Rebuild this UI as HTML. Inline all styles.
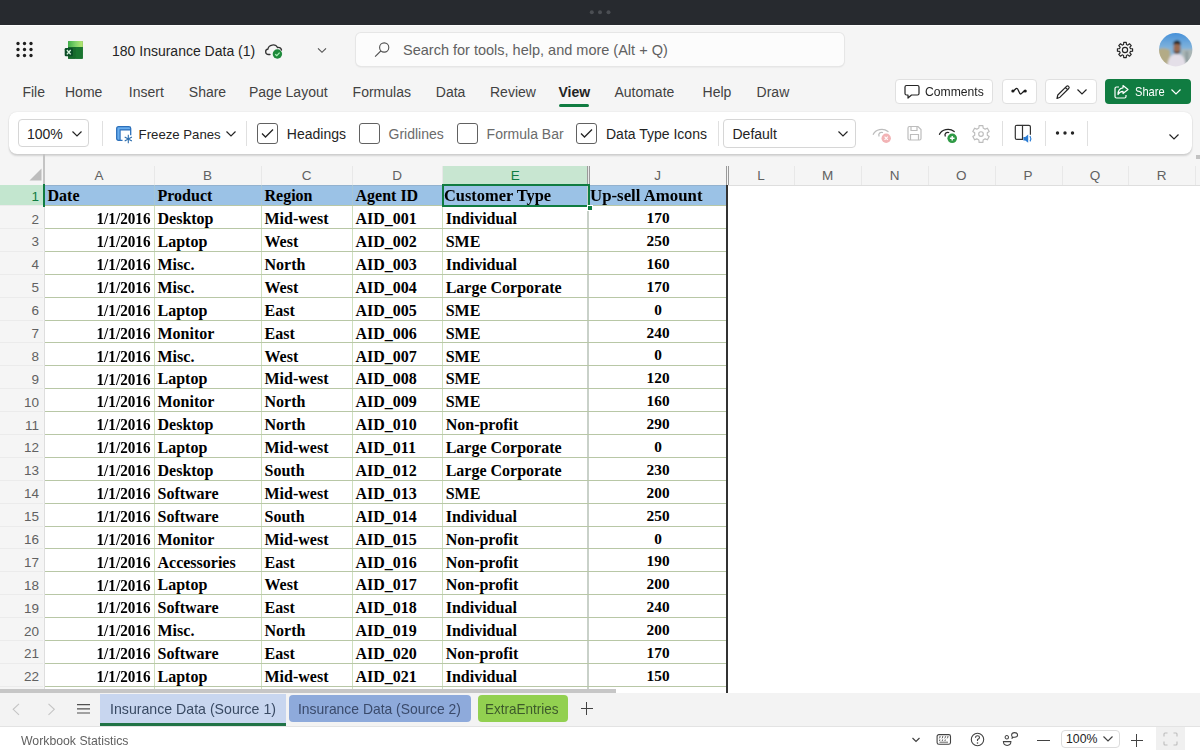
<!DOCTYPE html>
<html><head><meta charset="utf-8"><title>Excel</title>
<style>
html,body{margin:0;padding:0;width:1200px;height:750px;overflow:hidden;background:#f5f5f5;position:relative}
.t{position:absolute;line-height:1;white-space:nowrap}
svg{overflow:visible}
</style></head><body>
<div style="position:absolute;left:0px;top:0px;width:1200px;height:25px;background:#272a2f"></div>
<svg style="position:absolute;left:580px;top:4px" width="40" height="16" viewBox="0 0 40 16"><circle cx="11.799999999999955" cy="8.3" r="2" fill="#4b4e53"/><circle cx="20" cy="8.3" r="2" fill="#4b4e53"/><circle cx="28.5" cy="8.3" r="2" fill="#4b4e53"/></svg>
<div style="position:absolute;left:0px;top:25px;width:1200px;height:1px;background:#fdfdfd"></div>
<div style="position:absolute;left:0px;top:26px;width:1200px;height:664px;background:#f5f5f5"></div>
<svg style="position:absolute;left:10px;top:36px" width="30" height="28" viewBox="0 0 30 28"><circle cx="8" cy="7.5" r="1.65" fill="#1f1f1f"/><circle cx="14.5" cy="7.5" r="1.65" fill="#1f1f1f"/><circle cx="21" cy="7.5" r="1.65" fill="#1f1f1f"/><circle cx="8" cy="13.5" r="1.65" fill="#1f1f1f"/><circle cx="14.5" cy="13.5" r="1.65" fill="#1f1f1f"/><circle cx="21" cy="13.5" r="1.65" fill="#1f1f1f"/><circle cx="8" cy="19.5" r="1.65" fill="#1f1f1f"/><circle cx="14.5" cy="19.5" r="1.65" fill="#1f1f1f"/><circle cx="21" cy="19.5" r="1.65" fill="#1f1f1f"/></svg>
<svg style="position:absolute;left:60px;top:36px" width="28" height="28" viewBox="0 0 28 28">
<defs><linearGradient id="xg" x1="0" y1="0" x2="1" y2="0"><stop offset="0" stop-color="#3fae49"/><stop offset="0.5" stop-color="#7fd26a"/><stop offset="1" stop-color="#b8e872"/></linearGradient></defs>
<rect x="8" y="4.9" width="14.8" height="17.9" rx="1.3" fill="#1d6f2f"/>
<path d="M8 11 V6.2 Q8 4.9 9.3 4.9 H21.5 Q22.8 4.9 22.8 6.2 V11 Z" fill="url(#xg)"/>
<rect x="15.5" y="11" width="7.3" height="11.8" fill="#1a7530"/>
<rect x="8" y="11" width="7.5" height="11.8" fill="#176a2c"/>
<rect x="4.7" y="12" width="8.2" height="8.3" rx="1.2" fill="#0b4d27"/>
<path d="M6.9 14 L10.7 18.4 M10.7 14 L6.9 18.4" stroke="#d8f3df" stroke-width="1.4"/>
</svg>
<div class="t" style="left:112px;top:44.15px;font-size:14px;color:#242424;font-weight:normal;font-family:'Liberation Sans', sans-serif;">180 Insurance Data (1)</div>
<svg style="position:absolute;left:260px;top:38px" width="30" height="26" viewBox="0 0 30 26">
<path d="M10 16.5 H8.5 C5 16.5 4.6 11.5 8 11 C8.6 6.5 15.5 5.5 17.5 9.5 C19.5 9.3 21.2 10.5 21.5 12" fill="none" stroke="#333" stroke-width="1.3" stroke-linecap="round"/>
<circle cx="17.4" cy="16" r="4.7" fill="#1e8a3b"/>
<path d="M15.2 16.2 L16.8 17.6 L19.6 14.6" fill="none" stroke="#a6f0b4" stroke-width="1.3"/>
</svg>
<svg style="position:absolute;left:316px;top:45px" width="12" height="10" viewBox="0 0 12 10"><path d="M2 3.3 L6 7.3 L10 3.3" fill="none" stroke="#505050" stroke-width="1.1"/></svg>
<div style="position:absolute;left:355.5px;top:33px;width:488px;height:33px;background:#fcfcfc;border-radius:5px;box-shadow:0 0 0 1px #e6e6e6, 0 1px 2px rgba(0,0,0,.12)"></div>
<svg style="position:absolute;left:373px;top:42px" width="18" height="17" viewBox="0 0 18 17"><circle cx="11.2" cy="5.5" r="4.6" fill="none" stroke="#505050" stroke-width="1.1"/><path d="M7.9 8.8 L2.1 14.6" stroke="#505050" stroke-width="1.2"/></svg>
<div class="t" style="left:403px;top:43.22px;font-size:14.5px;color:#616161;font-weight:normal;font-family:'Liberation Sans', sans-serif;">Search for tools, help, and more (Alt + Q)</div>
<svg style="position:absolute;left:1115px;top:40px" width="20" height="20" viewBox="0 0 20 20"><path d="M8.59 4.58 L8.72 2.41 L11.28 2.41 L11.41 4.58 L12.83 5.17 L14.46 3.73 L16.27 5.54 L14.83 7.17 L15.42 8.59 L17.59 8.72 L17.59 11.28 L15.42 11.41 L14.83 12.83 L16.27 14.46 L14.46 16.27 L12.83 14.83 L11.41 15.42 L11.28 17.59 L8.72 17.59 L8.59 15.42 L7.17 14.83 L5.54 16.27 L3.73 14.46 L5.17 12.83 L4.58 11.41 L2.41 11.28 L2.41 8.72 L4.58 8.59 L5.17 7.17 L3.73 5.54 L5.54 3.73 L7.17 5.17 Z" fill="none" stroke="#242424" stroke-width="1.15" stroke-linejoin="round"/><circle cx="10" cy="10" r="2.6" fill="none" stroke="#242424" stroke-width="1.15"/></svg>
<svg style="position:absolute;left:1158.7px;top:33.2px" width="33.4" height="33.4" viewBox="0 0 33 33">
<defs><clipPath id="av"><circle cx="16.5" cy="16.5" r="16.5"/></clipPath>
<filter id="bl" x="-10%" y="-10%" width="120%" height="120%"><feGaussianBlur stdDeviation="0.9"/></filter>
<linearGradient id="sky" x1="0" y1="0" x2="0" y2="1"><stop offset="0" stop-color="#3d8bd8"/><stop offset="0.45" stop-color="#7fb2dc"/><stop offset="1" stop-color="#b9c3c8"/></linearGradient></defs>
<g clip-path="url(#av)"><g filter="url(#bl)">
<rect x="-3" y="-3" width="39" height="39" fill="url(#sky)"/>
<path d="M-3 17 C3 14 8 15 11 17 L11 36 H-3 Z" fill="#b3ab86"/>
<path d="M22 16 H36 V36 H22 Z" fill="#aab6b6"/>
<rect x="26" y="18" width="3" height="14" fill="#8e9c9e"/>
<path d="M8 36 C8.5 25 11 21 17.5 20.5 C24 21 26 25 27 36 Z" fill="#e4dfe8"/>
<ellipse cx="17.8" cy="14.5" rx="3.6" ry="4.6" fill="#9a6a50"/>
<path d="M14 11.5 C14.2 8.3 16 7.5 18 7.5 C20.2 7.5 21.8 8.8 21.5 12 C20 10.5 15.5 10.5 14 11.5 Z" fill="#1e1a18"/>
<path d="M14.5 16 C15 20 20.5 20 21 16 L21 18.5 C20 21.5 15.5 21.5 14.5 18.5 Z" fill="#3a2a20"/>
</g></g></svg>
<div class="t" style="left:22.4px;top:85.15px;font-size:14px;color:#424242;font-weight:normal;font-family:'Liberation Sans', sans-serif;">File</div>
<div class="t" style="left:65px;top:85.15px;font-size:14px;color:#424242;font-weight:normal;font-family:'Liberation Sans', sans-serif;">Home</div>
<div class="t" style="left:128.8px;top:85.15px;font-size:14px;color:#424242;font-weight:normal;font-family:'Liberation Sans', sans-serif;">Insert</div>
<div class="t" style="left:188.8px;top:85.15px;font-size:14px;color:#424242;font-weight:normal;font-family:'Liberation Sans', sans-serif;">Share</div>
<div class="t" style="left:249px;top:85.15px;font-size:14px;color:#424242;font-weight:normal;font-family:'Liberation Sans', sans-serif;">Page Layout</div>
<div class="t" style="left:352.6px;top:85.15px;font-size:14px;color:#424242;font-weight:normal;font-family:'Liberation Sans', sans-serif;">Formulas</div>
<div class="t" style="left:435.8px;top:85.15px;font-size:14px;color:#424242;font-weight:normal;font-family:'Liberation Sans', sans-serif;">Data</div>
<div class="t" style="left:490px;top:85.15px;font-size:14px;color:#424242;font-weight:normal;font-family:'Liberation Sans', sans-serif;">Review</div>
<div class="t" style="left:558.5px;top:85.15px;font-size:14px;color:#242424;font-weight:bold;font-family:'Liberation Sans', sans-serif;">View</div>
<div class="t" style="left:614.4px;top:85.15px;font-size:14px;color:#424242;font-weight:normal;font-family:'Liberation Sans', sans-serif;">Automate</div>
<div class="t" style="left:702.6px;top:85.15px;font-size:14px;color:#424242;font-weight:normal;font-family:'Liberation Sans', sans-serif;">Help</div>
<div class="t" style="left:756.6px;top:85.15px;font-size:14px;color:#424242;font-weight:normal;font-family:'Liberation Sans', sans-serif;">Draw</div>
<div style="position:absolute;left:559px;top:104px;width:30px;height:3px;background:#107c41;border-radius:2px"></div>
<div style="position:absolute;left:894.7px;top:79.3px;width:98px;height:25px;background:#fff;border:1px solid #e0e0e0;border-radius:4px;box-sizing:border-box"></div>
<svg style="position:absolute;left:903px;top:83px" width="18" height="18" viewBox="0 0 18 18"><path d="M3.5 2.5 H14.5 Q16 2.5 16 4 V10.5 Q16 12 14.5 12 H8.5 L5 15 V12 H3.5 Q2 12 2 10.5 V4 Q2 2.5 3.5 2.5 Z" fill="none" stroke="#242424" stroke-width="1.2" stroke-linejoin="round"/></svg>
<div class="t" style="left:924.8px;top:84.99px;font-size:13px;color:#242424;font-weight:normal;font-family:'Liberation Sans', sans-serif;transform:scaleX(0.9340);transform-origin:left top;">Comments</div>
<div style="position:absolute;left:1002px;top:79.3px;width:34.5px;height:25px;background:#fff;border:1px solid #e0e0e0;border-radius:4px;box-sizing:border-box"></div>
<svg style="position:absolute;left:1008px;top:84px" width="22" height="14" viewBox="0 0 22 14"><path d="M4.9 7 C6.5 7 7.5 4.3 8.8 4.3 C10.5 4.3 10.8 10 12.6 10 C14 10 14.5 7 17.2 7" fill="none" stroke="#1a1a1a" stroke-width="1.3" stroke-linecap="round"/><circle cx="4.9" cy="7" r="1.6" fill="#1a1a1a"/><circle cx="17.2" cy="7" r="1.6" fill="#1a1a1a"/></svg>
<div style="position:absolute;left:1045px;top:79.3px;width:51.5px;height:25px;background:#fff;border:1px solid #e0e0e0;border-radius:4px;box-sizing:border-box"></div>
<svg style="position:absolute;left:1054px;top:83px" width="18" height="18" viewBox="0 0 18 18"><path d="M3 15.5 L3.8 12 L12.5 3.3 Q13.5 2.3 14.6 3.4 Q15.7 4.5 14.7 5.5 L6 14.2 Z M11.3 4.5 L13.5 6.7" fill="none" stroke="#242424" stroke-width="1.2" stroke-linejoin="round"/></svg>
<svg style="position:absolute;left:1076px;top:88px" width="12" height="8" viewBox="0 0 12 8"><path d="M1.5 1.5 L6 6 L10.5 1.5" fill="none" stroke="#242424" stroke-width="1.2"/></svg>
<div style="position:absolute;left:1104.8px;top:79.3px;width:86.7px;height:25px;background:#107c41;border-radius:4px"></div>
<svg style="position:absolute;left:1113px;top:84px" width="17" height="16" viewBox="0 0 17 16"><path d="M6 3 H3.5 Q2 3 2 4.5 V12.5 Q2 14 3.5 14 H11.5 Q13 14 13 12.5 V11" fill="none" stroke="#fff" stroke-width="1.2"/><path d="M10 1.5 L15 5.5 L10 9.5 V7.3 C7.5 7.3 6 8.5 5 10.5 C5 6.5 7 4.2 10 3.8 Z" fill="none" stroke="#fff" stroke-width="1.2" stroke-linejoin="round"/></svg>
<div class="t" style="left:1135.4px;top:84.99px;font-size:13px;color:#ffffff;font-weight:normal;font-family:'Liberation Sans', sans-serif;transform:scaleX(0.8533);transform-origin:left top;">Share</div>
<svg style="position:absolute;left:1170px;top:88px" width="12" height="8" viewBox="0 0 12 8"><path d="M1.5 1.5 L6 6 L10.5 1.5" fill="none" stroke="#fff" stroke-width="1.2"/></svg>
<div style="position:absolute;left:0px;top:154px;width:1200px;height:31px;background:#f5f5f5"></div>
<div style="position:absolute;left:1196px;top:154.5px;width:4px;height:4px;background:#c2c2c2"></div>
<div style="position:absolute;left:9px;top:112.3px;width:1182.5px;height:42px;background:#fff;border-radius:8px;box-shadow:0 2px 2px rgba(0,0,0,.14),0 0 1.5px rgba(0,0,0,.12)"></div>
<div style="position:absolute;left:18px;top:119.2px;width:71.4px;height:28.2px;background:#fff;border:1px solid #d6d6d6;border-radius:4px;box-sizing:border-box"></div>
<div class="t" style="left:27px;top:127.15px;font-size:14px;color:#242424;font-weight:normal;font-family:'Liberation Sans', sans-serif;">100%</div>
<svg style="position:absolute;left:71px;top:130px" width="12" height="8" viewBox="0 0 12 8"><path d="M1.5 1.5 L6 6 L10.5 1.5" fill="none" stroke="#242424" stroke-width="1.2"/></svg>
<div style="position:absolute;left:102px;top:121px;width:1px;height:25px;background:#e0e0e0"></div>
<svg style="position:absolute;left:116px;top:126px" width="18" height="18" viewBox="0 0 18 18">
<path d="M0.7 2.5 Q0.7 0.7 2.5 0.7 H12.9 Q14.7 0.7 14.7 2.5 V3.9 H4.1 V14.3 H2.5 Q0.7 14.3 0.7 12.5 Z" fill="#6aaeee"/>
<path d="M6.5 14.3 H2.5 Q0.7 14.3 0.7 12.5 V2.5 Q0.7 0.7 2.5 0.7 H12.9 Q14.7 0.7 14.7 2.5 V9.3" fill="none" stroke="#2b6fba" stroke-width="1.3"/>
<path d="M4.1 14.3 V3.9 H14.7" fill="none" stroke="#2b6fba" stroke-width="1.1"/>
<path d="M12.3 8.8 V17.2 M8.7 10.9 L15.9 15.1 M15.9 10.9 L8.7 15.1" stroke="#2f6fae" stroke-width="1.1"/>
</svg>
<div class="t" style="left:138.6px;top:128.12px;font-size:13.2px;color:#242424;font-weight:normal;font-family:'Liberation Sans', sans-serif;">Freeze Panes</div>
<svg style="position:absolute;left:225px;top:130px" width="12" height="8" viewBox="0 0 12 8"><path d="M1.5 1.5 L6 6 L10.5 1.5" fill="none" stroke="#242424" stroke-width="1.2"/></svg>
<div style="position:absolute;left:246px;top:121px;width:1px;height:25px;background:#e0e0e0"></div>
<div style="position:absolute;left:257px;top:123px;width:20.5px;height:20.5px;border:1px solid #616161;border-radius:3px;box-sizing:border-box;background:#fff"></div>
<svg style="position:absolute;left:257px;top:123px" width="21" height="21" viewBox="0 0 21 21"><path d="M5 10.5 L8.5 14 L16 6.5" fill="none" stroke="#242424" stroke-width="1.3"/></svg>
<div class="t" style="left:286.8px;top:127.45px;font-size:14px;color:#242424;font-weight:normal;font-family:'Liberation Sans', sans-serif;">Headings</div>
<div style="position:absolute;left:359.3px;top:123px;width:20.5px;height:20.5px;border:1px solid #616161;border-radius:3px;box-sizing:border-box;background:#fff"></div>
<div class="t" style="left:388.5px;top:127.45px;font-size:14px;color:#6b6b6b;font-weight:normal;font-family:'Liberation Sans', sans-serif;">Gridlines</div>
<div style="position:absolute;left:457.3px;top:123px;width:20.5px;height:20.5px;border:1px solid #616161;border-radius:3px;box-sizing:border-box;background:#fff"></div>
<div class="t" style="left:486.6px;top:127.45px;font-size:14px;color:#6b6b6b;font-weight:normal;font-family:'Liberation Sans', sans-serif;">Formula Bar</div>
<div style="position:absolute;left:576px;top:123px;width:20.5px;height:20.5px;border:1px solid #616161;border-radius:3px;box-sizing:border-box;background:#fff"></div>
<svg style="position:absolute;left:576px;top:123px" width="21" height="21" viewBox="0 0 21 21"><path d="M5 10.5 L8.5 14 L16 6.5" fill="none" stroke="#242424" stroke-width="1.3"/></svg>
<div class="t" style="left:606px;top:127.45px;font-size:14px;color:#242424;font-weight:normal;font-family:'Liberation Sans', sans-serif;">Data Type Icons</div>
<div style="position:absolute;left:718px;top:121px;width:1px;height:25px;background:#e0e0e0"></div>
<div style="position:absolute;left:723px;top:119px;width:133px;height:28.6px;background:#fff;border:1px solid #d6d6d6;border-radius:4px;box-sizing:border-box"></div>
<div class="t" style="left:732.5px;top:127.15px;font-size:14px;color:#242424;font-weight:normal;font-family:'Liberation Sans', sans-serif;">Default</div>
<svg style="position:absolute;left:837px;top:130px" width="12" height="8" viewBox="0 0 12 8"><path d="M1.5 1.5 L6 6 L10.5 1.5" fill="none" stroke="#242424" stroke-width="1.2"/></svg>
<svg style="position:absolute;left:871px;top:124px" width="22" height="20" viewBox="0 0 22 20"><path d="M2.3 10.3 C4.5 5.5 12 3.5 17 7.5" fill="none" stroke="#bdbdbd" stroke-width="1.3" stroke-linecap="round"/><path d="M8 12 C7 9.5 9.5 7.8 11.5 8.5" fill="none" stroke="#bdbdbd" stroke-width="1.3" stroke-linecap="round"/><circle cx="15.2" cy="14.3" r="4.7" fill="#f2b3b5"/><path d="M13.6 12.7 L16.8 15.9 M16.8 12.7 L13.6 15.9" stroke="#fff" stroke-width="1.1"/></svg>
<svg style="position:absolute;left:906px;top:125px" width="17" height="17" viewBox="0 0 17 17">
<path d="M2 3 Q2 1.5 3.5 1.5 H12 L15 4.5 V13.5 Q15 15 13.5 15 H3.5 Q2 15 2 13.5 Z" fill="none" stroke="#bdbdbd" stroke-width="1.2"/>
<path d="M5 1.8 V5.5 H11 V1.8 M4.5 15 V9.5 H12.5 V15" fill="none" stroke="#bdbdbd" stroke-width="1.2"/></svg>
<svg style="position:absolute;left:938px;top:124px" width="22" height="20" viewBox="0 0 22 20"><path d="M1.5 10.3 C3.7 5.5 11.2 3.5 16.2 7.5" fill="none" stroke="#242424" stroke-width="1.3" stroke-linecap="round"/><path d="M7.2 12 C6.2 9.5 8.7 7.8 10.7 8.5" fill="none" stroke="#242424" stroke-width="1.3" stroke-linecap="round"/><circle cx="14.2" cy="14.3" r="4.8" fill="#2f9a45"/><path d="M11.9 14.3 H16.5 M14.2 12 V16.6" stroke="#fff" stroke-width="1.4"/></svg>
<svg style="position:absolute;left:971px;top:124px" width="20" height="20" viewBox="0 0 20 20"><path d="M7.86 3.97 L8.10 1.61 L11.90 1.61 L12.14 3.97 L14.16 5.13 L16.32 4.16 L18.21 7.45 L16.29 8.83 L16.29 11.17 L18.21 12.55 L16.32 15.84 L14.16 14.87 L12.14 16.03 L11.90 18.39 L8.10 18.39 L7.86 16.03 L5.84 14.87 L3.68 15.84 L1.79 12.55 L3.71 11.17 L3.71 8.83 L1.79 7.45 L3.68 4.16 L5.84 5.13 Z" fill="none" stroke="#bdbdbd" stroke-width="1.15" stroke-linejoin="round"/><circle cx="10" cy="10" r="2.3" fill="none" stroke="#bdbdbd" stroke-width="1.15"/></svg>
<div style="position:absolute;left:1002px;top:121px;width:1px;height:25px;background:#e0e0e0"></div>
<svg style="position:absolute;left:1013px;top:124px" width="22" height="20" viewBox="0 0 22 20"><path d="M9.5 15.4 H3.8 Q2.3 15.4 2.3 13.9 V2.8 Q2.3 1.3 3.8 1.3 H9.5 Z" fill="none" stroke="#333" stroke-width="1.2" stroke-linejoin="round"/><path d="M9.5 1.3 H15.9 Q17.4 1.3 17.4 2.8 V10.8" fill="none" stroke="#333" stroke-width="1.2"/><path d="M10.4 13 H12.2 L15.2 10.5 V18.8 L12.2 16.5 H10.4 Z" fill="#2b7cd3"/><path d="M17 12 Q18.6 14.6 17 17.4" fill="none" stroke="#2b7cd3" stroke-width="1.2"/></svg>
<div style="position:absolute;left:1044.8px;top:121px;width:1px;height:25px;background:#e0e0e0"></div>
<svg style="position:absolute;left:1050px;top:126px" width="30" height="14" viewBox="0 0 30 14"><circle cx="7.5" cy="7" r="1.7" fill="#242424"/><circle cx="15" cy="7" r="1.7" fill="#242424"/><circle cx="22.5" cy="7" r="1.7" fill="#242424"/></svg>
<div style="position:absolute;left:1087px;top:121px;width:1px;height:25px;background:#e0e0e0"></div>
<svg style="position:absolute;left:1168px;top:133px" width="12" height="8" viewBox="0 0 12 8"><path d="M1.5 1.5 L6 6 L10.5 1.5" fill="none" stroke="#242424" stroke-width="1.2"/></svg>
<div style="position:absolute;left:0px;top:185px;width:44px;height:508px;background:#f5f5f5"></div>
<div style="position:absolute;left:45px;top:185.5px;width:1155px;height:507.5px;background:#ffffff"></div>
<div style="position:absolute;left:45px;top:184.5px;width:1155px;height:1px;background:#dedede"></div>
<div style="position:absolute;left:442.2px;top:166px;width:146px;height:18.5px;background:#c8e6d1"></div>
<div style="position:absolute;left:154px;top:166px;width:1px;height:19px;background:#e8e8e8"></div>
<div style="position:absolute;left:261px;top:166px;width:1px;height:19px;background:#e8e8e8"></div>
<div style="position:absolute;left:352px;top:166px;width:1px;height:19px;background:#e8e8e8"></div>
<div style="position:absolute;left:442.2px;top:166px;width:1px;height:19px;background:#e8e8e8"></div>
<div style="position:absolute;left:588.2px;top:166px;width:1px;height:19px;background:#e8e8e8"></div>
<div style="position:absolute;left:727.5px;top:166px;width:1px;height:19px;background:#e8e8e8"></div>
<div style="position:absolute;left:794.3px;top:166px;width:1px;height:19px;background:#e8e8e8"></div>
<div style="position:absolute;left:861.1px;top:166px;width:1px;height:19px;background:#e8e8e8"></div>
<div style="position:absolute;left:927.9px;top:166px;width:1px;height:19px;background:#e8e8e8"></div>
<div style="position:absolute;left:994.7px;top:166px;width:1px;height:19px;background:#e8e8e8"></div>
<div style="position:absolute;left:1061.5px;top:166px;width:1px;height:19px;background:#e8e8e8"></div>
<div style="position:absolute;left:1128.3px;top:166px;width:1px;height:19px;background:#e8e8e8"></div>
<div style="position:absolute;left:1195.1px;top:166px;width:1px;height:19px;background:#e8e8e8"></div>
<div style="position:absolute;left:586.5px;top:166px;width:1px;height:19px;background:#9a9a9a"></div>
<div style="position:absolute;left:588.5px;top:166px;width:1px;height:19px;background:#9a9a9a"></div>
<div style="position:absolute;left:725.5px;top:166px;width:1px;height:19px;background:#9a9a9a"></div>
<div style="position:absolute;left:727.5px;top:166px;width:1px;height:19px;background:#9a9a9a"></div>
<div class="t" style="left:-101.0px;width:400px;text-align:center;top:169.17px;font-size:13.5px;color:#616161;font-weight:normal;font-family:'Liberation Sans', sans-serif;">A</div>
<div class="t" style="left:7.5px;width:400px;text-align:center;top:169.17px;font-size:13.5px;color:#616161;font-weight:normal;font-family:'Liberation Sans', sans-serif;">B</div>
<div class="t" style="left:106.5px;width:400px;text-align:center;top:169.17px;font-size:13.5px;color:#616161;font-weight:normal;font-family:'Liberation Sans', sans-serif;">C</div>
<div class="t" style="left:197.10000000000002px;width:400px;text-align:center;top:169.17px;font-size:13.5px;color:#616161;font-weight:normal;font-family:'Liberation Sans', sans-serif;">D</div>
<div class="t" style="left:315.20000000000005px;width:400px;text-align:center;top:169.17px;font-size:13.5px;color:#107c41;font-weight:normal;font-family:'Liberation Sans', sans-serif;">E</div>
<div class="t" style="left:457.6px;width:400px;text-align:center;top:169.17px;font-size:13.5px;color:#616161;font-weight:normal;font-family:'Liberation Sans', sans-serif;">J</div>
<div class="t" style="left:560.9px;width:400px;text-align:center;top:169.17px;font-size:13.5px;color:#616161;font-weight:normal;font-family:'Liberation Sans', sans-serif;">L</div>
<div class="t" style="left:627.7px;width:400px;text-align:center;top:169.17px;font-size:13.5px;color:#616161;font-weight:normal;font-family:'Liberation Sans', sans-serif;">M</div>
<div class="t" style="left:694.5px;width:400px;text-align:center;top:169.17px;font-size:13.5px;color:#616161;font-weight:normal;font-family:'Liberation Sans', sans-serif;">N</div>
<div class="t" style="left:761.3px;width:400px;text-align:center;top:169.17px;font-size:13.5px;color:#616161;font-weight:normal;font-family:'Liberation Sans', sans-serif;">O</div>
<div class="t" style="left:828.0999999999999px;width:400px;text-align:center;top:169.17px;font-size:13.5px;color:#616161;font-weight:normal;font-family:'Liberation Sans', sans-serif;">P</div>
<div class="t" style="left:894.9000000000001px;width:400px;text-align:center;top:169.17px;font-size:13.5px;color:#616161;font-weight:normal;font-family:'Liberation Sans', sans-serif;">Q</div>
<div class="t" style="left:961.6999999999998px;width:400px;text-align:center;top:169.17px;font-size:13.5px;color:#616161;font-weight:normal;font-family:'Liberation Sans', sans-serif;">R</div>
<div class="t" style="left:1028.5px;width:400px;text-align:center;top:169.17px;font-size:13.5px;color:#616161;font-weight:normal;font-family:'Liberation Sans', sans-serif;">S</div>
<svg style="position:absolute;left:29px;top:168px" width="13" height="13" viewBox="0 0 13 13"><path d="M12.5 0.5 V12.5 H0.5 Z" fill="#bdbdbd"/></svg>
<div style="position:absolute;left:43px;top:154px;width:2px;height:30px;background:#c4c4c4"></div>
<div style="position:absolute;left:44px;top:184px;width:1px;height:506px;background:#dedede"></div>
<div style="position:absolute;left:45px;top:184.7px;width:682px;height:21px;background:#9bc2e6"></div>
<div style="position:absolute;left:45px;top:184.7px;width:682px;height:1.3px;background:#93b2cf"></div>
<div style="position:absolute;left:0px;top:184.7px;width:43px;height:21.3px;background:#c3e6cf"></div>
<div style="position:absolute;left:153.5px;top:206px;width:1.5px;height:484px;background:#cfe0bf"></div>
<div style="position:absolute;left:153.5px;top:184.7px;width:1.5px;height:21.3px;background:#a6c6d6"></div>
<div style="position:absolute;left:260.5px;top:206px;width:1.5px;height:484px;background:#cfe0bf"></div>
<div style="position:absolute;left:260.5px;top:184.7px;width:1.5px;height:21.3px;background:#a6c6d6"></div>
<div style="position:absolute;left:351.5px;top:206px;width:1.5px;height:484px;background:#cfe0bf"></div>
<div style="position:absolute;left:351.5px;top:184.7px;width:1.5px;height:21.3px;background:#a6c6d6"></div>
<div style="position:absolute;left:441.7px;top:206px;width:1.5px;height:484px;background:#cfe0bf"></div>
<div style="position:absolute;left:441.7px;top:184.7px;width:1.5px;height:21.3px;background:#a6c6d6"></div>
<div style="position:absolute;left:587.4000000000001px;top:184.7px;width:1.8px;height:505px;background:#c9d1c9"></div>
<div style="position:absolute;left:45px;top:205.11px;width:682px;height:1px;background:#b8c7a6"></div>
<div style="position:absolute;left:0px;top:205.11px;width:43px;height:1px;background:#ebebeb"></div>
<div style="position:absolute;left:45px;top:228.0px;width:682px;height:1px;background:#b8c7a6"></div>
<div style="position:absolute;left:0px;top:228.0px;width:43px;height:1px;background:#ebebeb"></div>
<div style="position:absolute;left:45px;top:250.89px;width:682px;height:1px;background:#b8c7a6"></div>
<div style="position:absolute;left:0px;top:250.89px;width:43px;height:1px;background:#ebebeb"></div>
<div style="position:absolute;left:45px;top:273.78px;width:682px;height:1px;background:#b8c7a6"></div>
<div style="position:absolute;left:0px;top:273.78px;width:43px;height:1px;background:#ebebeb"></div>
<div style="position:absolute;left:45px;top:296.67px;width:682px;height:1px;background:#b8c7a6"></div>
<div style="position:absolute;left:0px;top:296.67px;width:43px;height:1px;background:#ebebeb"></div>
<div style="position:absolute;left:45px;top:319.56px;width:682px;height:1px;background:#b8c7a6"></div>
<div style="position:absolute;left:0px;top:319.56px;width:43px;height:1px;background:#ebebeb"></div>
<div style="position:absolute;left:45px;top:342.45px;width:682px;height:1px;background:#b8c7a6"></div>
<div style="position:absolute;left:0px;top:342.45px;width:43px;height:1px;background:#ebebeb"></div>
<div style="position:absolute;left:45px;top:365.34000000000003px;width:682px;height:1px;background:#b8c7a6"></div>
<div style="position:absolute;left:0px;top:365.34000000000003px;width:43px;height:1px;background:#ebebeb"></div>
<div style="position:absolute;left:45px;top:388.23px;width:682px;height:1px;background:#b8c7a6"></div>
<div style="position:absolute;left:0px;top:388.23px;width:43px;height:1px;background:#ebebeb"></div>
<div style="position:absolute;left:45px;top:411.12px;width:682px;height:1px;background:#b8c7a6"></div>
<div style="position:absolute;left:0px;top:411.12px;width:43px;height:1px;background:#ebebeb"></div>
<div style="position:absolute;left:45px;top:434.01px;width:682px;height:1px;background:#b8c7a6"></div>
<div style="position:absolute;left:0px;top:434.01px;width:43px;height:1px;background:#ebebeb"></div>
<div style="position:absolute;left:45px;top:456.9px;width:682px;height:1px;background:#b8c7a6"></div>
<div style="position:absolute;left:0px;top:456.9px;width:43px;height:1px;background:#ebebeb"></div>
<div style="position:absolute;left:45px;top:479.79px;width:682px;height:1px;background:#b8c7a6"></div>
<div style="position:absolute;left:0px;top:479.79px;width:43px;height:1px;background:#ebebeb"></div>
<div style="position:absolute;left:45px;top:502.68px;width:682px;height:1px;background:#b8c7a6"></div>
<div style="position:absolute;left:0px;top:502.68px;width:43px;height:1px;background:#ebebeb"></div>
<div style="position:absolute;left:45px;top:525.5699999999999px;width:682px;height:1px;background:#b8c7a6"></div>
<div style="position:absolute;left:0px;top:525.5699999999999px;width:43px;height:1px;background:#ebebeb"></div>
<div style="position:absolute;left:45px;top:548.46px;width:682px;height:1px;background:#b8c7a6"></div>
<div style="position:absolute;left:0px;top:548.46px;width:43px;height:1px;background:#ebebeb"></div>
<div style="position:absolute;left:45px;top:571.35px;width:682px;height:1px;background:#b8c7a6"></div>
<div style="position:absolute;left:0px;top:571.35px;width:43px;height:1px;background:#ebebeb"></div>
<div style="position:absolute;left:45px;top:594.24px;width:682px;height:1px;background:#b8c7a6"></div>
<div style="position:absolute;left:0px;top:594.24px;width:43px;height:1px;background:#ebebeb"></div>
<div style="position:absolute;left:45px;top:617.13px;width:682px;height:1px;background:#b8c7a6"></div>
<div style="position:absolute;left:0px;top:617.13px;width:43px;height:1px;background:#ebebeb"></div>
<div style="position:absolute;left:45px;top:640.02px;width:682px;height:1px;background:#b8c7a6"></div>
<div style="position:absolute;left:0px;top:640.02px;width:43px;height:1px;background:#ebebeb"></div>
<div style="position:absolute;left:45px;top:662.9100000000001px;width:682px;height:1px;background:#b8c7a6"></div>
<div style="position:absolute;left:0px;top:662.9100000000001px;width:43px;height:1px;background:#ebebeb"></div>
<div style="position:absolute;left:45px;top:685.8px;width:682px;height:1px;background:#b8c7a6"></div>
<div style="position:absolute;left:0px;top:685.8px;width:43px;height:1px;background:#ebebeb"></div>
<div style="position:absolute;left:45px;top:708.69px;width:682px;height:1px;background:#b8c7a6"></div>
<div style="position:absolute;left:0px;top:708.69px;width:43px;height:1px;background:#ebebeb"></div>
<div style="position:absolute;left:726px;top:184.7px;width:2px;height:508px;background:#333333"></div>
<div class="t" style="right:1161px;top:189.68px;font-size:13.5px;color:#107c41;font-weight:normal;font-family:'Liberation Sans', sans-serif;">1</div>
<div class="t" style="left:47.5px;top:188.31px;font-size:16px;color:#000;font-weight:bold;font-family:'Liberation Serif', serif;">Date</div>
<div class="t" style="left:157.5px;top:188.31px;font-size:16px;color:#000;font-weight:bold;font-family:'Liberation Serif', serif;">Product</div>
<div class="t" style="left:264.5px;top:188.31px;font-size:16px;color:#000;font-weight:bold;font-family:'Liberation Serif', serif;">Region</div>
<div class="t" style="left:355.5px;top:188.31px;font-size:16px;color:#000;font-weight:bold;font-family:'Liberation Serif', serif;">Agent ID</div>
<div class="t" style="left:444.09999999999997px;top:188.14px;font-size:16.2px;color:#000;font-weight:bold;font-family:'Liberation Serif', serif;transform:scaleX(1.0137);transform-origin:left top;">Customer Type</div>
<div class="t" style="left:590.4000000000001px;top:187.98px;font-size:16.4px;color:#000;font-weight:bold;font-family:'Liberation Serif', serif;transform:scaleX(1.0255);transform-origin:left top;">Up-sell Amount</div>
<div class="t" style="right:1161px;top:212.57px;font-size:13.5px;color:#616161;font-weight:normal;font-family:'Liberation Sans', sans-serif;">2</div>
<div class="t" style="right:1049.2px;top:211.29px;font-size:15.9px;color:#000;font-weight:bold;font-family:'Liberation Serif', serif;transform:scaleX(0.9552);transform-origin:right top;">1/1/2016</div>
<div class="t" style="left:157.5px;top:211.20px;font-size:16px;color:#000;font-weight:bold;font-family:'Liberation Serif', serif;">Desktop</div>
<div class="t" style="left:264.5px;top:211.20px;font-size:16px;color:#000;font-weight:bold;font-family:'Liberation Serif', serif;">Mid-west</div>
<div class="t" style="left:355.5px;top:211.20px;font-size:16px;color:#000;font-weight:bold;font-family:'Liberation Serif', serif;">AID_001</div>
<div class="t" style="left:445.7px;top:211.20px;font-size:16px;color:#000;font-weight:bold;font-family:'Liberation Serif', serif;">Individual</div>
<div class="t" style="left:458.1px;width:400px;text-align:center;top:210.09px;font-size:15.3px;color:#000;font-weight:bold;font-family:'Liberation Serif', serif;">170</div>
<div class="t" style="right:1161px;top:235.46px;font-size:13.5px;color:#616161;font-weight:normal;font-family:'Liberation Sans', sans-serif;">3</div>
<div class="t" style="right:1049.2px;top:234.18px;font-size:15.9px;color:#000;font-weight:bold;font-family:'Liberation Serif', serif;transform:scaleX(0.9552);transform-origin:right top;">1/1/2016</div>
<div class="t" style="left:157.5px;top:234.09px;font-size:16px;color:#000;font-weight:bold;font-family:'Liberation Serif', serif;">Laptop</div>
<div class="t" style="left:264.5px;top:234.09px;font-size:16px;color:#000;font-weight:bold;font-family:'Liberation Serif', serif;">West</div>
<div class="t" style="left:355.5px;top:234.09px;font-size:16px;color:#000;font-weight:bold;font-family:'Liberation Serif', serif;">AID_002</div>
<div class="t" style="left:445.7px;top:234.09px;font-size:16px;color:#000;font-weight:bold;font-family:'Liberation Serif', serif;">SME</div>
<div class="t" style="left:458.1px;width:400px;text-align:center;top:232.98px;font-size:15.3px;color:#000;font-weight:bold;font-family:'Liberation Serif', serif;">250</div>
<div class="t" style="right:1161px;top:258.35px;font-size:13.5px;color:#616161;font-weight:normal;font-family:'Liberation Sans', sans-serif;">4</div>
<div class="t" style="right:1049.2px;top:257.07px;font-size:15.9px;color:#000;font-weight:bold;font-family:'Liberation Serif', serif;transform:scaleX(0.9552);transform-origin:right top;">1/1/2016</div>
<div class="t" style="left:157.5px;top:256.98px;font-size:16px;color:#000;font-weight:bold;font-family:'Liberation Serif', serif;">Misc.</div>
<div class="t" style="left:264.5px;top:256.98px;font-size:16px;color:#000;font-weight:bold;font-family:'Liberation Serif', serif;">North</div>
<div class="t" style="left:355.5px;top:256.98px;font-size:16px;color:#000;font-weight:bold;font-family:'Liberation Serif', serif;">AID_003</div>
<div class="t" style="left:445.7px;top:256.98px;font-size:16px;color:#000;font-weight:bold;font-family:'Liberation Serif', serif;">Individual</div>
<div class="t" style="left:458.1px;width:400px;text-align:center;top:255.87px;font-size:15.3px;color:#000;font-weight:bold;font-family:'Liberation Serif', serif;">160</div>
<div class="t" style="right:1161px;top:281.24px;font-size:13.5px;color:#616161;font-weight:normal;font-family:'Liberation Sans', sans-serif;">5</div>
<div class="t" style="right:1049.2px;top:279.96px;font-size:15.9px;color:#000;font-weight:bold;font-family:'Liberation Serif', serif;transform:scaleX(0.9552);transform-origin:right top;">1/1/2016</div>
<div class="t" style="left:157.5px;top:279.87px;font-size:16px;color:#000;font-weight:bold;font-family:'Liberation Serif', serif;">Misc.</div>
<div class="t" style="left:264.5px;top:279.87px;font-size:16px;color:#000;font-weight:bold;font-family:'Liberation Serif', serif;">West</div>
<div class="t" style="left:355.5px;top:279.87px;font-size:16px;color:#000;font-weight:bold;font-family:'Liberation Serif', serif;">AID_004</div>
<div class="t" style="left:445.7px;top:279.87px;font-size:16px;color:#000;font-weight:bold;font-family:'Liberation Serif', serif;">Large Corporate</div>
<div class="t" style="left:458.1px;width:400px;text-align:center;top:278.76px;font-size:15.3px;color:#000;font-weight:bold;font-family:'Liberation Serif', serif;">170</div>
<div class="t" style="right:1161px;top:304.13px;font-size:13.5px;color:#616161;font-weight:normal;font-family:'Liberation Sans', sans-serif;">6</div>
<div class="t" style="right:1049.2px;top:302.85px;font-size:15.9px;color:#000;font-weight:bold;font-family:'Liberation Serif', serif;transform:scaleX(0.9552);transform-origin:right top;">1/1/2016</div>
<div class="t" style="left:157.5px;top:302.76px;font-size:16px;color:#000;font-weight:bold;font-family:'Liberation Serif', serif;">Laptop</div>
<div class="t" style="left:264.5px;top:302.76px;font-size:16px;color:#000;font-weight:bold;font-family:'Liberation Serif', serif;">East</div>
<div class="t" style="left:355.5px;top:302.76px;font-size:16px;color:#000;font-weight:bold;font-family:'Liberation Serif', serif;">AID_005</div>
<div class="t" style="left:445.7px;top:302.76px;font-size:16px;color:#000;font-weight:bold;font-family:'Liberation Serif', serif;">SME</div>
<div class="t" style="left:458.1px;width:400px;text-align:center;top:301.65px;font-size:15.3px;color:#000;font-weight:bold;font-family:'Liberation Serif', serif;">0</div>
<div class="t" style="right:1161px;top:327.02px;font-size:13.5px;color:#616161;font-weight:normal;font-family:'Liberation Sans', sans-serif;">7</div>
<div class="t" style="right:1049.2px;top:325.74px;font-size:15.9px;color:#000;font-weight:bold;font-family:'Liberation Serif', serif;transform:scaleX(0.9552);transform-origin:right top;">1/1/2016</div>
<div class="t" style="left:157.5px;top:325.65px;font-size:16px;color:#000;font-weight:bold;font-family:'Liberation Serif', serif;">Monitor</div>
<div class="t" style="left:264.5px;top:325.65px;font-size:16px;color:#000;font-weight:bold;font-family:'Liberation Serif', serif;">East</div>
<div class="t" style="left:355.5px;top:325.65px;font-size:16px;color:#000;font-weight:bold;font-family:'Liberation Serif', serif;">AID_006</div>
<div class="t" style="left:445.7px;top:325.65px;font-size:16px;color:#000;font-weight:bold;font-family:'Liberation Serif', serif;">SME</div>
<div class="t" style="left:458.1px;width:400px;text-align:center;top:324.54px;font-size:15.3px;color:#000;font-weight:bold;font-family:'Liberation Serif', serif;">240</div>
<div class="t" style="right:1161px;top:349.91px;font-size:13.5px;color:#616161;font-weight:normal;font-family:'Liberation Sans', sans-serif;">8</div>
<div class="t" style="right:1049.2px;top:348.63px;font-size:15.9px;color:#000;font-weight:bold;font-family:'Liberation Serif', serif;transform:scaleX(0.9552);transform-origin:right top;">1/1/2016</div>
<div class="t" style="left:157.5px;top:348.54px;font-size:16px;color:#000;font-weight:bold;font-family:'Liberation Serif', serif;">Misc.</div>
<div class="t" style="left:264.5px;top:348.54px;font-size:16px;color:#000;font-weight:bold;font-family:'Liberation Serif', serif;">West</div>
<div class="t" style="left:355.5px;top:348.54px;font-size:16px;color:#000;font-weight:bold;font-family:'Liberation Serif', serif;">AID_007</div>
<div class="t" style="left:445.7px;top:348.54px;font-size:16px;color:#000;font-weight:bold;font-family:'Liberation Serif', serif;">SME</div>
<div class="t" style="left:458.1px;width:400px;text-align:center;top:347.43px;font-size:15.3px;color:#000;font-weight:bold;font-family:'Liberation Serif', serif;">0</div>
<div class="t" style="right:1161px;top:372.80px;font-size:13.5px;color:#616161;font-weight:normal;font-family:'Liberation Sans', sans-serif;">9</div>
<div class="t" style="right:1049.2px;top:371.52px;font-size:15.9px;color:#000;font-weight:bold;font-family:'Liberation Serif', serif;transform:scaleX(0.9552);transform-origin:right top;">1/1/2016</div>
<div class="t" style="left:157.5px;top:371.43px;font-size:16px;color:#000;font-weight:bold;font-family:'Liberation Serif', serif;">Laptop</div>
<div class="t" style="left:264.5px;top:371.43px;font-size:16px;color:#000;font-weight:bold;font-family:'Liberation Serif', serif;">Mid-west</div>
<div class="t" style="left:355.5px;top:371.43px;font-size:16px;color:#000;font-weight:bold;font-family:'Liberation Serif', serif;">AID_008</div>
<div class="t" style="left:445.7px;top:371.43px;font-size:16px;color:#000;font-weight:bold;font-family:'Liberation Serif', serif;">SME</div>
<div class="t" style="left:458.1px;width:400px;text-align:center;top:370.32px;font-size:15.3px;color:#000;font-weight:bold;font-family:'Liberation Serif', serif;">120</div>
<div class="t" style="right:1161px;top:395.69px;font-size:13.5px;color:#616161;font-weight:normal;font-family:'Liberation Sans', sans-serif;">10</div>
<div class="t" style="right:1049.2px;top:394.41px;font-size:15.9px;color:#000;font-weight:bold;font-family:'Liberation Serif', serif;transform:scaleX(0.9552);transform-origin:right top;">1/1/2016</div>
<div class="t" style="left:157.5px;top:394.32px;font-size:16px;color:#000;font-weight:bold;font-family:'Liberation Serif', serif;">Monitor</div>
<div class="t" style="left:264.5px;top:394.32px;font-size:16px;color:#000;font-weight:bold;font-family:'Liberation Serif', serif;">North</div>
<div class="t" style="left:355.5px;top:394.32px;font-size:16px;color:#000;font-weight:bold;font-family:'Liberation Serif', serif;">AID_009</div>
<div class="t" style="left:445.7px;top:394.32px;font-size:16px;color:#000;font-weight:bold;font-family:'Liberation Serif', serif;">SME</div>
<div class="t" style="left:458.1px;width:400px;text-align:center;top:393.21px;font-size:15.3px;color:#000;font-weight:bold;font-family:'Liberation Serif', serif;">160</div>
<div class="t" style="right:1161px;top:418.58px;font-size:13.5px;color:#616161;font-weight:normal;font-family:'Liberation Sans', sans-serif;">11</div>
<div class="t" style="right:1049.2px;top:417.30px;font-size:15.9px;color:#000;font-weight:bold;font-family:'Liberation Serif', serif;transform:scaleX(0.9552);transform-origin:right top;">1/1/2016</div>
<div class="t" style="left:157.5px;top:417.21px;font-size:16px;color:#000;font-weight:bold;font-family:'Liberation Serif', serif;">Desktop</div>
<div class="t" style="left:264.5px;top:417.21px;font-size:16px;color:#000;font-weight:bold;font-family:'Liberation Serif', serif;">North</div>
<div class="t" style="left:355.5px;top:417.21px;font-size:16px;color:#000;font-weight:bold;font-family:'Liberation Serif', serif;">AID_010</div>
<div class="t" style="left:445.7px;top:417.21px;font-size:16px;color:#000;font-weight:bold;font-family:'Liberation Serif', serif;">Non-profit</div>
<div class="t" style="left:458.1px;width:400px;text-align:center;top:416.10px;font-size:15.3px;color:#000;font-weight:bold;font-family:'Liberation Serif', serif;">290</div>
<div class="t" style="right:1161px;top:441.47px;font-size:13.5px;color:#616161;font-weight:normal;font-family:'Liberation Sans', sans-serif;">12</div>
<div class="t" style="right:1049.2px;top:440.19px;font-size:15.9px;color:#000;font-weight:bold;font-family:'Liberation Serif', serif;transform:scaleX(0.9552);transform-origin:right top;">1/1/2016</div>
<div class="t" style="left:157.5px;top:440.10px;font-size:16px;color:#000;font-weight:bold;font-family:'Liberation Serif', serif;">Laptop</div>
<div class="t" style="left:264.5px;top:440.10px;font-size:16px;color:#000;font-weight:bold;font-family:'Liberation Serif', serif;">Mid-west</div>
<div class="t" style="left:355.5px;top:440.10px;font-size:16px;color:#000;font-weight:bold;font-family:'Liberation Serif', serif;">AID_011</div>
<div class="t" style="left:445.7px;top:440.10px;font-size:16px;color:#000;font-weight:bold;font-family:'Liberation Serif', serif;">Large Corporate</div>
<div class="t" style="left:458.1px;width:400px;text-align:center;top:438.99px;font-size:15.3px;color:#000;font-weight:bold;font-family:'Liberation Serif', serif;">0</div>
<div class="t" style="right:1161px;top:464.36px;font-size:13.5px;color:#616161;font-weight:normal;font-family:'Liberation Sans', sans-serif;">13</div>
<div class="t" style="right:1049.2px;top:463.08px;font-size:15.9px;color:#000;font-weight:bold;font-family:'Liberation Serif', serif;transform:scaleX(0.9552);transform-origin:right top;">1/1/2016</div>
<div class="t" style="left:157.5px;top:462.99px;font-size:16px;color:#000;font-weight:bold;font-family:'Liberation Serif', serif;">Desktop</div>
<div class="t" style="left:264.5px;top:462.99px;font-size:16px;color:#000;font-weight:bold;font-family:'Liberation Serif', serif;">South</div>
<div class="t" style="left:355.5px;top:462.99px;font-size:16px;color:#000;font-weight:bold;font-family:'Liberation Serif', serif;">AID_012</div>
<div class="t" style="left:445.7px;top:462.99px;font-size:16px;color:#000;font-weight:bold;font-family:'Liberation Serif', serif;">Large Corporate</div>
<div class="t" style="left:458.1px;width:400px;text-align:center;top:461.88px;font-size:15.3px;color:#000;font-weight:bold;font-family:'Liberation Serif', serif;">230</div>
<div class="t" style="right:1161px;top:487.25px;font-size:13.5px;color:#616161;font-weight:normal;font-family:'Liberation Sans', sans-serif;">14</div>
<div class="t" style="right:1049.2px;top:485.97px;font-size:15.9px;color:#000;font-weight:bold;font-family:'Liberation Serif', serif;transform:scaleX(0.9552);transform-origin:right top;">1/1/2016</div>
<div class="t" style="left:157.5px;top:485.88px;font-size:16px;color:#000;font-weight:bold;font-family:'Liberation Serif', serif;">Software</div>
<div class="t" style="left:264.5px;top:485.88px;font-size:16px;color:#000;font-weight:bold;font-family:'Liberation Serif', serif;">Mid-west</div>
<div class="t" style="left:355.5px;top:485.88px;font-size:16px;color:#000;font-weight:bold;font-family:'Liberation Serif', serif;">AID_013</div>
<div class="t" style="left:445.7px;top:485.88px;font-size:16px;color:#000;font-weight:bold;font-family:'Liberation Serif', serif;">SME</div>
<div class="t" style="left:458.1px;width:400px;text-align:center;top:484.77px;font-size:15.3px;color:#000;font-weight:bold;font-family:'Liberation Serif', serif;">200</div>
<div class="t" style="right:1161px;top:510.14px;font-size:13.5px;color:#616161;font-weight:normal;font-family:'Liberation Sans', sans-serif;">15</div>
<div class="t" style="right:1049.2px;top:508.86px;font-size:15.9px;color:#000;font-weight:bold;font-family:'Liberation Serif', serif;transform:scaleX(0.9552);transform-origin:right top;">1/1/2016</div>
<div class="t" style="left:157.5px;top:508.77px;font-size:16px;color:#000;font-weight:bold;font-family:'Liberation Serif', serif;">Software</div>
<div class="t" style="left:264.5px;top:508.77px;font-size:16px;color:#000;font-weight:bold;font-family:'Liberation Serif', serif;">South</div>
<div class="t" style="left:355.5px;top:508.77px;font-size:16px;color:#000;font-weight:bold;font-family:'Liberation Serif', serif;">AID_014</div>
<div class="t" style="left:445.7px;top:508.77px;font-size:16px;color:#000;font-weight:bold;font-family:'Liberation Serif', serif;">Individual</div>
<div class="t" style="left:458.1px;width:400px;text-align:center;top:507.66px;font-size:15.3px;color:#000;font-weight:bold;font-family:'Liberation Serif', serif;">250</div>
<div class="t" style="right:1161px;top:533.03px;font-size:13.5px;color:#616161;font-weight:normal;font-family:'Liberation Sans', sans-serif;">16</div>
<div class="t" style="right:1049.2px;top:531.75px;font-size:15.9px;color:#000;font-weight:bold;font-family:'Liberation Serif', serif;transform:scaleX(0.9552);transform-origin:right top;">1/1/2016</div>
<div class="t" style="left:157.5px;top:531.66px;font-size:16px;color:#000;font-weight:bold;font-family:'Liberation Serif', serif;">Monitor</div>
<div class="t" style="left:264.5px;top:531.66px;font-size:16px;color:#000;font-weight:bold;font-family:'Liberation Serif', serif;">Mid-west</div>
<div class="t" style="left:355.5px;top:531.66px;font-size:16px;color:#000;font-weight:bold;font-family:'Liberation Serif', serif;">AID_015</div>
<div class="t" style="left:445.7px;top:531.66px;font-size:16px;color:#000;font-weight:bold;font-family:'Liberation Serif', serif;">Non-profit</div>
<div class="t" style="left:458.1px;width:400px;text-align:center;top:530.55px;font-size:15.3px;color:#000;font-weight:bold;font-family:'Liberation Serif', serif;">0</div>
<div class="t" style="right:1161px;top:555.92px;font-size:13.5px;color:#616161;font-weight:normal;font-family:'Liberation Sans', sans-serif;">17</div>
<div class="t" style="right:1049.2px;top:554.64px;font-size:15.9px;color:#000;font-weight:bold;font-family:'Liberation Serif', serif;transform:scaleX(0.9552);transform-origin:right top;">1/1/2016</div>
<div class="t" style="left:157.5px;top:554.55px;font-size:16px;color:#000;font-weight:bold;font-family:'Liberation Serif', serif;">Accessories</div>
<div class="t" style="left:264.5px;top:554.55px;font-size:16px;color:#000;font-weight:bold;font-family:'Liberation Serif', serif;">East</div>
<div class="t" style="left:355.5px;top:554.55px;font-size:16px;color:#000;font-weight:bold;font-family:'Liberation Serif', serif;">AID_016</div>
<div class="t" style="left:445.7px;top:554.55px;font-size:16px;color:#000;font-weight:bold;font-family:'Liberation Serif', serif;">Non-profit</div>
<div class="t" style="left:458.1px;width:400px;text-align:center;top:553.44px;font-size:15.3px;color:#000;font-weight:bold;font-family:'Liberation Serif', serif;">190</div>
<div class="t" style="right:1161px;top:578.81px;font-size:13.5px;color:#616161;font-weight:normal;font-family:'Liberation Sans', sans-serif;">18</div>
<div class="t" style="right:1049.2px;top:577.53px;font-size:15.9px;color:#000;font-weight:bold;font-family:'Liberation Serif', serif;transform:scaleX(0.9552);transform-origin:right top;">1/1/2016</div>
<div class="t" style="left:157.5px;top:577.44px;font-size:16px;color:#000;font-weight:bold;font-family:'Liberation Serif', serif;">Laptop</div>
<div class="t" style="left:264.5px;top:577.44px;font-size:16px;color:#000;font-weight:bold;font-family:'Liberation Serif', serif;">West</div>
<div class="t" style="left:355.5px;top:577.44px;font-size:16px;color:#000;font-weight:bold;font-family:'Liberation Serif', serif;">AID_017</div>
<div class="t" style="left:445.7px;top:577.44px;font-size:16px;color:#000;font-weight:bold;font-family:'Liberation Serif', serif;">Non-profit</div>
<div class="t" style="left:458.1px;width:400px;text-align:center;top:576.33px;font-size:15.3px;color:#000;font-weight:bold;font-family:'Liberation Serif', serif;">200</div>
<div class="t" style="right:1161px;top:601.70px;font-size:13.5px;color:#616161;font-weight:normal;font-family:'Liberation Sans', sans-serif;">19</div>
<div class="t" style="right:1049.2px;top:600.42px;font-size:15.9px;color:#000;font-weight:bold;font-family:'Liberation Serif', serif;transform:scaleX(0.9552);transform-origin:right top;">1/1/2016</div>
<div class="t" style="left:157.5px;top:600.33px;font-size:16px;color:#000;font-weight:bold;font-family:'Liberation Serif', serif;">Software</div>
<div class="t" style="left:264.5px;top:600.33px;font-size:16px;color:#000;font-weight:bold;font-family:'Liberation Serif', serif;">East</div>
<div class="t" style="left:355.5px;top:600.33px;font-size:16px;color:#000;font-weight:bold;font-family:'Liberation Serif', serif;">AID_018</div>
<div class="t" style="left:445.7px;top:600.33px;font-size:16px;color:#000;font-weight:bold;font-family:'Liberation Serif', serif;">Individual</div>
<div class="t" style="left:458.1px;width:400px;text-align:center;top:599.22px;font-size:15.3px;color:#000;font-weight:bold;font-family:'Liberation Serif', serif;">240</div>
<div class="t" style="right:1161px;top:624.59px;font-size:13.5px;color:#616161;font-weight:normal;font-family:'Liberation Sans', sans-serif;">20</div>
<div class="t" style="right:1049.2px;top:623.31px;font-size:15.9px;color:#000;font-weight:bold;font-family:'Liberation Serif', serif;transform:scaleX(0.9552);transform-origin:right top;">1/1/2016</div>
<div class="t" style="left:157.5px;top:623.22px;font-size:16px;color:#000;font-weight:bold;font-family:'Liberation Serif', serif;">Misc.</div>
<div class="t" style="left:264.5px;top:623.22px;font-size:16px;color:#000;font-weight:bold;font-family:'Liberation Serif', serif;">North</div>
<div class="t" style="left:355.5px;top:623.22px;font-size:16px;color:#000;font-weight:bold;font-family:'Liberation Serif', serif;">AID_019</div>
<div class="t" style="left:445.7px;top:623.22px;font-size:16px;color:#000;font-weight:bold;font-family:'Liberation Serif', serif;">Individual</div>
<div class="t" style="left:458.1px;width:400px;text-align:center;top:622.11px;font-size:15.3px;color:#000;font-weight:bold;font-family:'Liberation Serif', serif;">200</div>
<div class="t" style="right:1161px;top:647.48px;font-size:13.5px;color:#616161;font-weight:normal;font-family:'Liberation Sans', sans-serif;">21</div>
<div class="t" style="right:1049.2px;top:646.20px;font-size:15.9px;color:#000;font-weight:bold;font-family:'Liberation Serif', serif;transform:scaleX(0.9552);transform-origin:right top;">1/1/2016</div>
<div class="t" style="left:157.5px;top:646.11px;font-size:16px;color:#000;font-weight:bold;font-family:'Liberation Serif', serif;">Software</div>
<div class="t" style="left:264.5px;top:646.11px;font-size:16px;color:#000;font-weight:bold;font-family:'Liberation Serif', serif;">East</div>
<div class="t" style="left:355.5px;top:646.11px;font-size:16px;color:#000;font-weight:bold;font-family:'Liberation Serif', serif;">AID_020</div>
<div class="t" style="left:445.7px;top:646.11px;font-size:16px;color:#000;font-weight:bold;font-family:'Liberation Serif', serif;">Non-profit</div>
<div class="t" style="left:458.1px;width:400px;text-align:center;top:645.00px;font-size:15.3px;color:#000;font-weight:bold;font-family:'Liberation Serif', serif;">170</div>
<div class="t" style="right:1161px;top:670.37px;font-size:13.5px;color:#616161;font-weight:normal;font-family:'Liberation Sans', sans-serif;">22</div>
<div class="t" style="right:1049.2px;top:669.09px;font-size:15.9px;color:#000;font-weight:bold;font-family:'Liberation Serif', serif;transform:scaleX(0.9552);transform-origin:right top;">1/1/2016</div>
<div class="t" style="left:157.5px;top:669.00px;font-size:16px;color:#000;font-weight:bold;font-family:'Liberation Serif', serif;">Laptop</div>
<div class="t" style="left:264.5px;top:669.00px;font-size:16px;color:#000;font-weight:bold;font-family:'Liberation Serif', serif;">Mid-west</div>
<div class="t" style="left:355.5px;top:669.00px;font-size:16px;color:#000;font-weight:bold;font-family:'Liberation Serif', serif;">AID_021</div>
<div class="t" style="left:445.7px;top:669.00px;font-size:16px;color:#000;font-weight:bold;font-family:'Liberation Serif', serif;">Individual</div>
<div class="t" style="left:458.1px;width:400px;text-align:center;top:667.89px;font-size:15.3px;color:#000;font-weight:bold;font-family:'Liberation Serif', serif;">150</div>
<div class="t" style="right:1161px;top:693.26px;font-size:13.5px;color:#616161;font-weight:normal;font-family:'Liberation Sans', sans-serif;">23</div>
<div class="t" style="right:1049.2px;top:691.98px;font-size:15.9px;color:#000;font-weight:bold;font-family:'Liberation Serif', serif;transform:scaleX(0.9552);transform-origin:right top;">1/1/2016</div>
<div class="t" style="left:157.5px;top:691.89px;font-size:16px;color:#000;font-weight:bold;font-family:'Liberation Serif', serif;">Laptop</div>
<div class="t" style="left:264.5px;top:691.89px;font-size:16px;color:#000;font-weight:bold;font-family:'Liberation Serif', serif;">West</div>
<div class="t" style="left:355.5px;top:691.89px;font-size:16px;color:#000;font-weight:bold;font-family:'Liberation Serif', serif;">AID_022</div>
<div class="t" style="left:445.7px;top:691.89px;font-size:16px;color:#000;font-weight:bold;font-family:'Liberation Serif', serif;">SME</div>
<div class="t" style="left:458.1px;width:400px;text-align:center;top:690.78px;font-size:15.3px;color:#000;font-weight:bold;font-family:'Liberation Serif', serif;">210</div>
<div style="position:absolute;left:441.5px;top:183.7px;width:148px;height:23.5px;border:2px solid #107c41;box-sizing:border-box"></div>
<div style="position:absolute;left:586.5px;top:204.5px;width:4.5px;height:4.5px;background:#107c41;border:1px solid #fff"></div>
<div style="position:absolute;left:43px;top:184px;width:2px;height:23px;background:#107c41"></div>
<div style="position:absolute;left:0px;top:689px;width:616px;height:4px;background:#c6c6c6"></div>
<div style="position:absolute;left:0px;top:693px;width:1200px;height:33px;background:#f3f3f3"></div>
<div style="position:absolute;left:0px;top:725.5px;width:1200px;height:1px;background:#e3e3e3"></div>
<div style="position:absolute;left:0px;top:726.5px;width:1200px;height:24px;background:#ffffff"></div>
<svg style="position:absolute;left:0px;top:693px" width="100" height="34" viewBox="0 0 100 34"><path d="M19 10.8 L13.2 16.3 L19 21.8" fill="none" stroke="#c4c4c4" stroke-width="1.1"/><path d="M48.5 10.8 L54.3 16.3 L48.5 21.8" fill="none" stroke="#c4c4c4" stroke-width="1.1"/><path d="M77 11.7 H90 M77 15.8 H90 M77 20 H90" stroke="#505050" stroke-width="1.2"/></svg>
<div style="position:absolute;left:100.2px;top:693.8px;width:185.5px;height:29px;background:#c8d6ef"></div>
<div style="position:absolute;left:100px;top:722.6px;width:186px;height:3.4px;background:#217346"></div>
<div class="t" style="left:109.6px;top:702.47px;font-size:14.8px;color:#394a63;font-weight:normal;font-family:'Liberation Sans', sans-serif;transform:scaleX(0.9564);transform-origin:left top;">Insurance Data (Source 1)</div>
<div style="position:absolute;left:289.4px;top:695px;width:182px;height:27px;background:#8eaadb;border-radius:4px"></div>
<div class="t" style="left:298.4px;top:702.47px;font-size:14.8px;color:#3a4a6b;font-weight:normal;font-family:'Liberation Sans', sans-serif;transform:scaleX(0.9391);transform-origin:left top;">Insurance Data (Source 2)</div>
<div style="position:absolute;left:477.5px;top:695px;width:90px;height:27px;background:#92d050;border-radius:4px"></div>
<div class="t" style="left:485.4px;top:702.47px;font-size:14.8px;color:#3d5a2b;font-weight:normal;font-family:'Liberation Sans', sans-serif;transform:scaleX(0.9131);transform-origin:left top;">ExtraEntries</div>
<div style="position:absolute;left:580.5px;top:708px;width:12.5px;height:1.3px;background:#424242"></div>
<div style="position:absolute;left:586.1px;top:702px;width:1.3px;height:12.5px;background:#424242"></div>
<div class="t" style="left:20.8px;top:733.99px;font-size:13px;color:#616161;font-weight:normal;font-family:'Liberation Sans', sans-serif;transform:scaleX(0.9438);transform-origin:left top;">Workbook Statistics</div>
<svg style="position:absolute;left:911px;top:736px" width="10" height="8" viewBox="0 0 10 8"><path d="M1.5 2 L5 5.5 L8.5 2" fill="none" stroke="#424242" stroke-width="1.2"/></svg>
<svg style="position:absolute;left:935px;top:733px" width="17" height="13" viewBox="0 0 17 13"><rect x="2.1" y="1.6" width="13.4" height="9.6" rx="1.8" fill="none" stroke="#424242" stroke-width="1.1"/><path d="M4.5 3.6 L5.3 3.6 L4.3 5.4 M7.2 3.6 L8 3.6 L7 5.4 M9.9 3.6 L10.7 3.6 L9.7 5.4 M12.4 3.6 L13.2 3.6 L12.2 5.4 M4.5 6.8 L5.1 6.8 L4.3 8 M7.2 6.8 L7.8 6.8 L7 8 M9.9 6.8 L10.5 6.8 L9.7 8 M4.5 9.2 H13" fill="none" stroke="#555" stroke-width="0.9"/></svg>
<svg style="position:absolute;left:970px;top:732px" width="15" height="15" viewBox="0 0 15 15"><circle cx="7.5" cy="7.5" r="6.2" fill="none" stroke="#424242" stroke-width="1.1"/><path d="M5.5 5.8 Q5.5 3.8 7.5 3.8 Q9.5 3.8 9.5 5.6 Q9.5 6.8 7.5 7.6 V9" fill="none" stroke="#424242" stroke-width="1.1"/><circle cx="7.5" cy="11" r="0.8" fill="#424242"/></svg>
<svg style="position:absolute;left:1002px;top:731px" width="17" height="16" viewBox="0 0 17 16"><circle cx="4.8" cy="6.2" r="1.7" fill="none" stroke="#424242" stroke-width="1.05"/><path d="M1.4 10.6 H8.9 Q8.9 14.4 5.15 14.4 Q1.4 14.4 1.4 10.6 Z" fill="none" stroke="#424242" stroke-width="1.05"/><path d="M12.6 1.6 Q15.6 1.6 15.6 3.9 Q15.6 6.2 12.6 6.2 H11.6 L10 7.4 L10.4 5.8 Q9.6 5.2 9.6 3.9 Q9.6 1.6 12.6 1.6 Z" fill="none" stroke="#424242" stroke-width="1.05" stroke-linejoin="round"/></svg>
<div style="position:absolute;left:1037px;top:739.5px;width:12.5px;height:1.2px;background:#424242"></div>
<div style="position:absolute;left:1060.8px;top:729.5px;width:59.7px;height:18px;background:#fff;border:1px solid #dcdcdc;border-radius:4px;box-sizing:border-box"></div>
<div class="t" style="left:1066px;top:733.09px;font-size:12.3px;color:#242424;font-weight:normal;font-family:'Liberation Sans', sans-serif;">100%</div>
<svg style="position:absolute;left:1102px;top:735px" width="12" height="8" viewBox="0 0 12 8"><path d="M1.5 1.5 L6 6 L10.5 1.5" fill="none" stroke="#424242" stroke-width="1.2"/></svg>
<div style="position:absolute;left:1130.5px;top:739.8px;width:12.5px;height:1.2px;background:#424242"></div>
<div style="position:absolute;left:1136.2px;top:734px;width:1.2px;height:12.5px;background:#424242"></div>
<div style="position:absolute;left:1156px;top:727px;width:29px;height:23px;background:#f0f0f0"></div>
<svg style="position:absolute;left:1163px;top:732px" width="15" height="14" viewBox="0 0 15 14"><path d="M1 4.5 V2 Q1 1 2 1 H4.5 M10.5 1 H13 Q14 1 14 2 V4.5 M14 9.5 V12 Q14 13 13 13 H10.5 M4.5 13 H2 Q1 13 1 12 V9.5" fill="none" stroke="#bdbdbd" stroke-width="1.1"/></svg>
</body></html>
